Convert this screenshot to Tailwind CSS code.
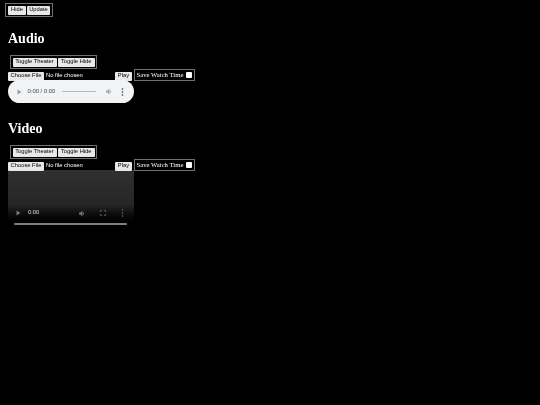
<!DOCTYPE html>
<html lang="en">
<head>
    <meta charset="UTF-8">
    <meta name="viewport" content="width=device-width, initial-scale=1.0">
    <title>Media Player</title>
    <script src="https://cdn.jsdelivr.net/npm/@tailwindcss/browser@4"></script>
</head>
<body class="bg-black min-h-screen overflow-hidden font-['Liberation_Sans',Arial,sans-serif] text-white">
<div class="blur-[0.3px] pt-[3px]">
    <!-- top controls -->
    <div class="ml-[5px] w-[48px] h-[14px] border border-[#707070] flex items-center gap-[1px] pl-[2px]">
        <button class="h-[9px] w-[18px] bg-[#e8e8e8] rounded-[1px] text-black text-[5.800px] leading-none">Hide</button>
        <button class="h-[9px] w-[23px] bg-[#e8e8e8] rounded-[1px] text-black text-[5.800px] leading-none">Update</button>
    </div>

    <!-- audio -->
    <section class="ml-[8px] mt-[14px]">
        <h1 class="font-['Liberation_Serif',serif] font-bold text-[14px] leading-[16px]">Audio</h1>
        <div class="ml-[1.500px] mt-[8px] w-[87.500px] h-[14px] border border-[#707070] flex items-center gap-[1.500px] pl-[2px]">
            <button class="h-[9px] w-[44px] bg-[#e8e8e8] rounded-[1px] text-black text-[5.800px] leading-none">Toggle Theater</button>
            <button class="h-[9px] w-[36.500px] bg-[#e8e8e8] rounded-[1px] text-black text-[5.800px] leading-none">Toggle Hide</button>
        </div>
        <div class="flex items-start w-[187px] h-[12px]">
            <div class="w-[107px] flex items-center h-[8.500px] mt-[3px]">
                <button class="h-[8.500px] w-[36px] bg-[#e8e8e8] rounded-[1px] text-black text-[5.800px] leading-none">Choose File</button>
                <span class="ml-[2px] text-[5.800px] leading-none">No file chosen</span>
            </div>
            <button class="mt-[2.500px] h-[9px] w-[17px] bg-[#e8e8e8] rounded-[1px] text-black text-[5.800px] leading-none">Play</button>
            <label class="ml-[2px] w-[60.500px] h-[12px] border border-[#707070] flex items-center justify-between pl-[1.500px] pr-[2px] font-['Liberation_Serif',serif] text-[6.700px] leading-none whitespace-nowrap">
                Save Watch Time
                <span class="w-[6px] h-[6px] bg-white rounded-[1px]"></span>
            </label>
        </div>
        <!-- audio player -->
        <div class="mt-[-1px] w-[126px] h-[23px] rounded-full bg-[#f1f3f4] flex items-center relative">
            <svg class="ml-[9px] w-[5px] h-[6px]" viewBox="0 0 5 6"><path d="M0.5 0.5 L4.500 3 L0.5 5.500 Z" fill="#9a9a9a"/></svg>
            <span class="ml-[5.500px] text-[5.900px] leading-none text-[#444]">0:00 / 0:00</span>
            <span class="ml-[6.500px] w-[34px] h-[1.500px] rounded-full bg-[#b4b6b8]"></span>
            <svg class="ml-[9px] w-[9px] h-[9px]" viewBox="0 0 24 24"><path d="M3 9v6h4l5 5V4L7 9H3zm13.500 3a4.500 4.500 0 0 0-2.500-4v8a4.500 4.500 0 0 0 2.500-4z" fill="#a8a8a8"/></svg>
            <svg class="ml-[7px] w-[3px] h-[8px]" viewBox="0 0 3 8"><circle cx="1.500" cy="1" r=".8" fill="#333"/><circle cx="1.500" cy="4" r=".8" fill="#333"/><circle cx="1.500" cy="7" r=".8" fill="#333"/></svg>
        </div>
    </section>

    <!-- video -->
    <section class="ml-[8px] mt-[18px]">
        <h1 class="font-['Liberation_Serif',serif] font-bold text-[14px] leading-[16px]">Video</h1>
        <div class="ml-[1.500px] mt-[8px] w-[87.500px] h-[14px] border border-[#707070] flex items-center gap-[1.500px] pl-[2px]">
            <button class="h-[9px] w-[44px] bg-[#e8e8e8] rounded-[1px] text-black text-[5.800px] leading-none">Toggle Theater</button>
            <button class="h-[9px] w-[36.500px] bg-[#e8e8e8] rounded-[1px] text-black text-[5.800px] leading-none">Toggle Hide</button>
        </div>
        <div class="flex items-start w-[187px] h-[12px]">
            <div class="w-[107px] flex items-center h-[8.500px] mt-[3px]">
                <button class="h-[8.500px] w-[36px] bg-[#e8e8e8] rounded-[1px] text-black text-[5.800px] leading-none">Choose File</button>
                <span class="ml-[2px] text-[5.800px] leading-none">No file chosen</span>
            </div>
            <button class="mt-[2.500px] h-[9px] w-[17px] bg-[#e8e8e8] rounded-[1px] text-black text-[5.800px] leading-none">Play</button>
            <label class="ml-[2px] w-[60.500px] h-[12px] border border-[#707070] flex items-center justify-between pl-[1.500px] pr-[2px] font-['Liberation_Serif',serif] text-[6.700px] leading-none whitespace-nowrap">
                Save Watch Time
                <span class="w-[6px] h-[6px] bg-white rounded-[1px]"></span>
            </label>
        </div>
        <!-- video player -->
        <div class="mt-[-1px] w-[126px] h-[58px] bg-gradient-to-b from-[#303030] via-[#262626] via-60% to-black flex flex-col justify-end">
            <div class="flex items-center h-[8px] mb-[6px]">
                <svg class="ml-[8px] w-[5px] h-[6px]" viewBox="0 0 5 6"><path d="M0.5 0.5 L4.500 3 L0.5 5.500 Z" fill="#777"/></svg>
                <span class="ml-[7px] text-[5.800px] leading-none text-[#ddd]">0:00</span>
                <svg class="ml-[39px] w-[9px] h-[9px]" viewBox="0 0 24 24"><path d="M3 9v6h4l5 5V4L7 9H3zm13.500 3a4.500 4.500 0 0 0-2.500-4v8a4.500 4.500 0 0 0 2.500-4z" fill="#777"/></svg>
                <svg class="ml-[13px] w-[6px] h-[6px]" viewBox="0 0 6 6"><path d="M.5 2V.5H2M4 .5h1.500V2M5.500 4v1.500H4M2 5.500H.5V4" fill="none" stroke="#777" stroke-width=".7"/></svg>
                <svg class="ml-[15px] w-[3px] h-[8px]" viewBox="0 0 3 8"><circle cx="1.500" cy="1" r=".7" fill="#777"/><circle cx="1.500" cy="4" r=".7" fill="#777"/><circle cx="1.500" cy="7" r=".7" fill="#777"/></svg>
            </div>
            <div class="ml-[6px] mb-[3px] w-[113px] h-[2px] bg-[#808080] rounded-full"></div>
        </div>
    </section>
</div>
</body>
</html>
